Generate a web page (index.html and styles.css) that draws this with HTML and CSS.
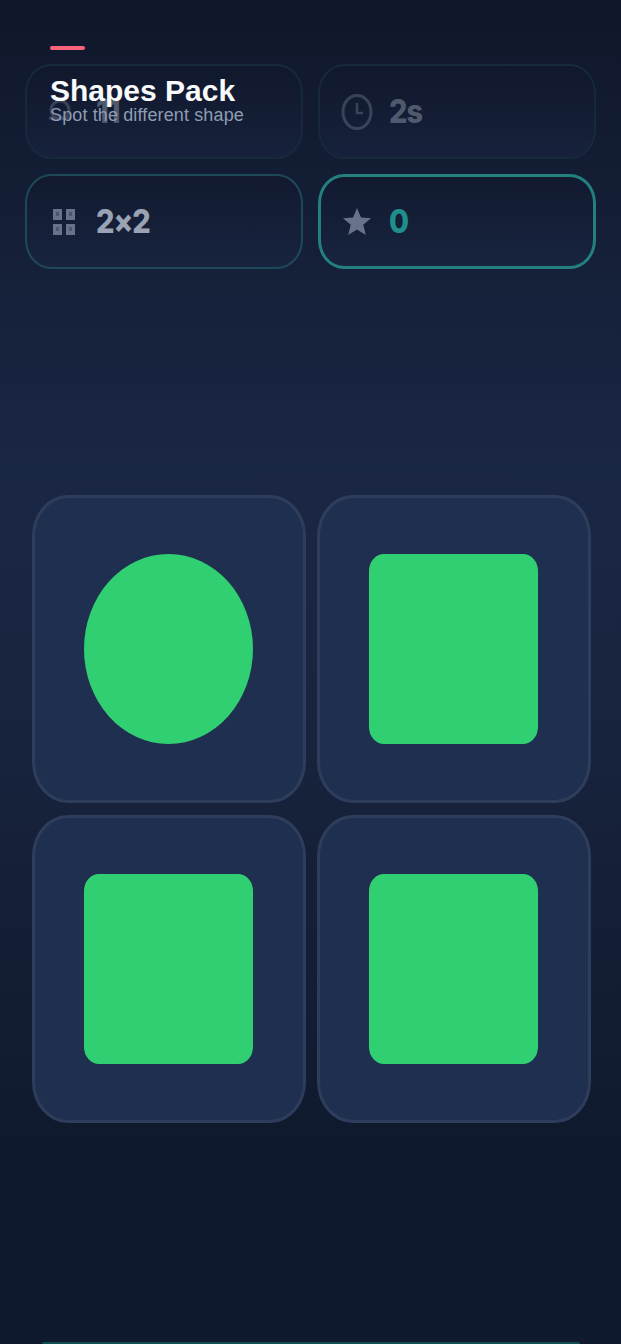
FILE: index.html
```html
<!DOCTYPE html>
<html lang="en">
<head>
  <meta charset="UTF-8">
  <title>Shapes Pack</title>
  <link rel="stylesheet" href="styles.css">
</head>
<body>
  <div class="screen">
    <div class="pack-title">
      <div class="accent"></div>
      <h1>Shapes Pack</h1>
      <p>Spot the different shape</p>
    </div>

    <div class="stats">
      <div class="stat stat-faint">
        <svg class="stat-icon" viewBox="0 0 32 36" width="32" height="36"><circle cx="12" cy="16" r="9" fill="none" stroke="currentColor" stroke-width="3"/><path d="M1 24h22" stroke="currentColor" stroke-width="3"/></svg>
        <span class="stat-value">11</span>
      </div>
      <div class="stat stat-faint">
        <svg class="stat-icon" viewBox="0 0 32 36" width="32" height="36"><ellipse cx="16" cy="18" rx="14" ry="16.500" fill="none" stroke="currentColor" stroke-width="3"/><path d="M16 9v10h6" fill="none" stroke="currentColor" stroke-width="2.500"/></svg>
        <span class="stat-value">2s</span>
      </div>
      <div class="stat stat-mid">
        <svg class="stat-icon" viewBox="0 0 32 26" width="32" height="26"><path d="M5 0h9v11H5zM18 0h9v11h-9zM5 15h9v11H5zM18 15h9v11h-9z" fill="currentColor"/><path d="M8 3h3v4H8zM21 3h3v4h-3zM8 18h3v4H8zM21 18h3v4h-3z" fill="#2a3550" opacity=".45"/></svg>
        <span class="stat-value">2×2</span>
      </div>
      <div class="stat stat-active">
        <svg class="stat-icon" viewBox="0 0 32 28" width="32" height="28"><path d="M16 0l4 9.500 10 .8-7.700 6.500 2.500 10.200-8.800-5.500-8.800 5.500 2.500-10.200L2 10.300l10-.8z" fill="currentColor"/></svg>
        <span class="stat-value">0</span>
      </div>
    </div>

    <div class="board">
      <div class="tile"><div class="shape circle"></div></div>
      <div class="tile"><div class="shape square"></div></div>
      <div class="tile"><div class="shape square"></div></div>
      <div class="tile"><div class="shape square"></div></div>
    </div>

    <div class="bottom-bar"></div>
  </div>
</body>
</html>
```

FILE: styles.css
```css
* {
  box-sizing: border-box;
}
html, body {
  margin: 0;
  height: 100%;
}
body {
  font-family: "Liberation Sans", Arial, sans-serif;
  background: #0f172a;
  overflow: hidden;
}
.screen {
  position: relative;
  height: 1344px;
  padding: 64px 25px 0;
  background: linear-gradient(180deg, #0f172a 0%, #1a2744 35%, #19243f 50%, #0f192d 88%, #0f1a2e 100%);
}
.pack-title {
  position: absolute;
  top: 46px;
  left: 50px;
  z-index: 2;
}
.accent {
  width: 35px;
  height: 4px;
  border-radius: 2px;
  background: #f9647c;
}
.pack-title h1 {
  margin: 24px 0 0;
  font-size: 30px;
  line-height: 34px;
  font-weight: 700;
  color: #f8fafc;
}
.pack-title p {
  margin: -4px 0 0;
  font-size: 18px;
  line-height: 22px;
  letter-spacing: 0.13px;
  color: #8e9cb3;
}
.stats {
  display: grid;
  grid-template-columns: 278px 278px;
  grid-auto-rows: 95px;
  column-gap: 15px;
  row-gap: 15px;
}
.stat {
  display: flex;
  align-items: center;
  gap: 16px;
  padding: 0 21px;
  border-radius: 26px / 29px;
  border: 2px solid #17293c;
  background: linear-gradient(180deg, rgba(15, 23, 42, 0.5), rgba(30, 42, 76, 0.35));
}
.stat-icon {
  flex: none;
  color: #687389;
}
.stat-value {
  display: inline-block;
  font-family: Inter, "Liberation Sans", sans-serif;
  font-size: 29px;
  font-weight: 800;
  letter-spacing: -1px;
  transform: scaleY(1.12);
  color: #9aa3b3;
}
.stat-faint .stat-icon,
.stat-faint .stat-value {
  opacity: 0.45;
}
.stat-mid {
  border-color: #1e4a58;
}
.stat-active {
  padding: 0 20px;
  border: 3px solid #23807f;
}
.stat-active .stat-value {
  color: #1f8f8c;
}
.board {
  display: grid;
  grid-template-columns: 274px 274px;
  grid-auto-rows: 308px;
  gap: 12px 11px;
  margin: 226px 0 0 6.5px;
}
.tile {
  display: flex;
  align-items: center;
  justify-content: center;
  border-radius: 36px / 41px;
  border: 3px solid #2f3d5c;
  background: #1f2f4f;
}
.shape {
  width: 169px;
  height: 190px;
  background: #30d072;
}
.circle {
  border-radius: 50%;
}
.square {
  border-radius: 15px / 17px;
}
.bottom-bar {
  position: absolute;
  left: 42px;
  right: 41px;
  bottom: 0;
  height: 2px;
  background: #134e55;
  border-radius: 2px 2px 0 0;
}
```
